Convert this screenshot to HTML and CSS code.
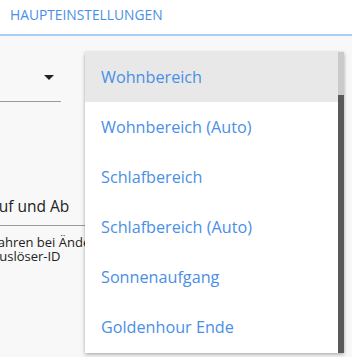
FILE: index.html
```html
<!DOCTYPE html>
<html>
<head>
<meta charset="utf-8">
<link rel="stylesheet" href="styles.css">
</head>
<body>
<div class="header">
  <span class="tab">HAUPTEINSTELLUNGEN</span>
</div>
<div class="content">
  <div class="form">
    <div class="select">
      <span class="arrow"></span>
    </div>
    <div class="field">
      <span class="field-text">Auf und Ab</span>
    </div>
    <div class="help">Fahren bei Änderung<br>Auslöser-ID</div>
  </div>
  <div class="menu">
    <div class="item active">Wohnbereich</div>
    <div class="item">Wohnbereich (Auto)</div>
    <div class="item">Schlafbereich</div>
    <div class="item">Schlafbereich (Auto)</div>
    <div class="item">Sonnenaufgang</div>
    <div class="item">Goldenhour Ende</div>
    <div class="scrollbar"><div class="thumb"></div></div>
  </div>
</div>
</body>
</html>
```

FILE: styles.css
```css
html, body {
  margin: 0;
  padding: 0;
  width: 352px;
  height: 357px;
  overflow: hidden;
  font-family: "Open Sans", "Noto Sans", sans-serif;
  background: #f8f8f8;
}
.header {
  height: 34px;
  background: #ffffff;
  border-bottom: 2px solid #a9cff4;
  display: flex;
  align-items: center;
  padding-left: 10px;
}
.tab {
  color: #4a8fe6;
  font-size: 13.8px;
  line-height: 1;
  margin-top: -5px;
}
.content {
  position: relative;
  height: 321px;
}
.form {
  width: 85px;
  overflow: hidden;
  display: flex;
  flex-direction: column;
}
.select {
  margin-top: 27px;
  width: 61px;
  height: 38px;
  border-bottom: 1px solid #9a9a9a;
  position: relative;
}
.arrow {
  position: absolute;
  left: 44px;
  top: 12px;
  width: 0;
  height: 0;
  border-left: 5px solid transparent;
  border-right: 5px solid transparent;
  border-top: 5px solid #222;
}
.field {
  margin-top: 85px;
  height: 38px;
  border-bottom: 1px solid #9a9a9a;
  display: flex;
  align-items: center;
  white-space: nowrap;
}
.field-text {
  margin-left: -11px;
  font-size: 15.5px;
  color: #222;
}
.help {
  margin-top: 9px;
  margin-left: -9px;
  font-size: 13px;
  line-height: 14px;
  color: #222;
  white-space: nowrap;
}
.menu {
  position: absolute;
  left: 85px;
  top: 16px;
  width: 259px;
  height: 301px;
  background: #ffffff;
  box-shadow: 0 2px 4px rgba(0,0,0,0.25), 0 0 2px rgba(0,0,0,0.12);
  display: flex;
  flex-direction: column;
  overflow: hidden;
}
.item {
  height: 50px;
  flex: none;
  display: flex;
  align-items: center;
  padding-left: 16px;
  font-size: 16.2px;
  color: #4a8fe6;
}
.item.active {
  background: #e8e8e8;
}
.scrollbar {
  position: absolute;
  right: 0;
  top: 0;
  bottom: 0;
  width: 6px;
  background: #595959;
}
.thumb {
  height: 43px;
  background: #cacaca;
}
```
